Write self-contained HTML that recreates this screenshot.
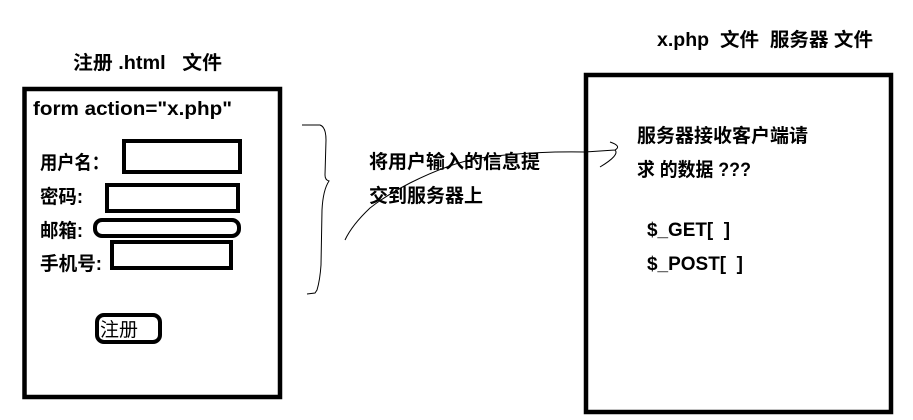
<!DOCTYPE html>
<html><head><meta charset="utf-8"><style>
html,body{margin:0;padding:0;background:#fff;width:913px;height:420px;overflow:hidden}
svg{display:block}
text{font-family:"Liberation Sans","Noto Sans CJK SC","WenQuanYi Zen Hei",sans-serif;font-weight:bold;font-size:19px;fill:#000}
</style></head><body>
<svg width="913" height="420" viewBox="0 0 913 420">
<text x="73" y="69" textLength="149" lengthAdjust="spacingAndGlyphs">注册 .html &#160;&#160;文件</text>
<rect x="24.5" y="89" width="255.5" height="308" fill="none" stroke="#000" stroke-width="4.5"/>
<text x="33" y="115" textLength="199" lengthAdjust="spacingAndGlyphs">form action="x.php"</text>
<text x="40" y="169" textLength="69" lengthAdjust="spacingAndGlyphs">用户名：</text>
<rect x="124" y="141" width="116" height="31" fill="none" stroke="#000" stroke-width="4"/>
<text x="40" y="203" textLength="43" lengthAdjust="spacingAndGlyphs">密码:</text>
<rect x="107" y="185" width="131" height="26" fill="none" stroke="#000" stroke-width="4"/>
<text x="40" y="237" textLength="43" lengthAdjust="spacingAndGlyphs">邮箱:</text>
<rect x="95" y="220" width="144" height="16" rx="7" fill="none" stroke="#000" stroke-width="4"/>
<text x="40" y="270" textLength="62" lengthAdjust="spacingAndGlyphs">手机号:</text>
<rect x="112" y="242" width="119" height="26" fill="none" stroke="#000" stroke-width="4"/>
<rect x="97" y="315" width="63" height="27" rx="7" fill="none" stroke="#000" stroke-width="4"/>
<text x="100" y="336" style="font-weight:normal;font-size:19px" textLength="38" lengthAdjust="spacingAndGlyphs">注册</text>
<path d="M302 125 L320 125 Q326 127 326 140 L325 175 Q325 180 329 181 Q323 190 322 210 L321 265 Q320 280 317 290 L315 293 L307 294" fill="none" stroke="#000" stroke-width="1"/>
<path d="M345 240 Q352 225 370 208 Q385 196 410 183 Q450 163 480 158 Q530 151 585 152 L615 150 Q622 146 610 142 M615 150 Q620 155 600 167" fill="none" stroke="#000" stroke-width="1"/>
<text x="369" y="168" textLength="171" lengthAdjust="spacingAndGlyphs">将用户输入的信息提</text>
<text x="369" y="202" textLength="114" lengthAdjust="spacingAndGlyphs">交到服务器上</text>
<text x="657" y="46" textLength="216" lengthAdjust="spacingAndGlyphs">x.php &#160;文件 &#160;服务器 文件</text>
<rect x="586" y="75" width="305" height="337" fill="none" stroke="#000" stroke-width="4.5"/>
<text x="637" y="142" textLength="171" lengthAdjust="spacingAndGlyphs">服务器接收客户端请</text>
<text x="637" y="176" textLength="114" lengthAdjust="spacingAndGlyphs">求 的数据 ???</text>
<text x="647" y="236" textLength="83" lengthAdjust="spacingAndGlyphs">$_GET[ &#160;]</text>
<text x="647" y="270" textLength="96" lengthAdjust="spacingAndGlyphs">$_POST[ &#160;]</text>
</svg>
</body></html>
